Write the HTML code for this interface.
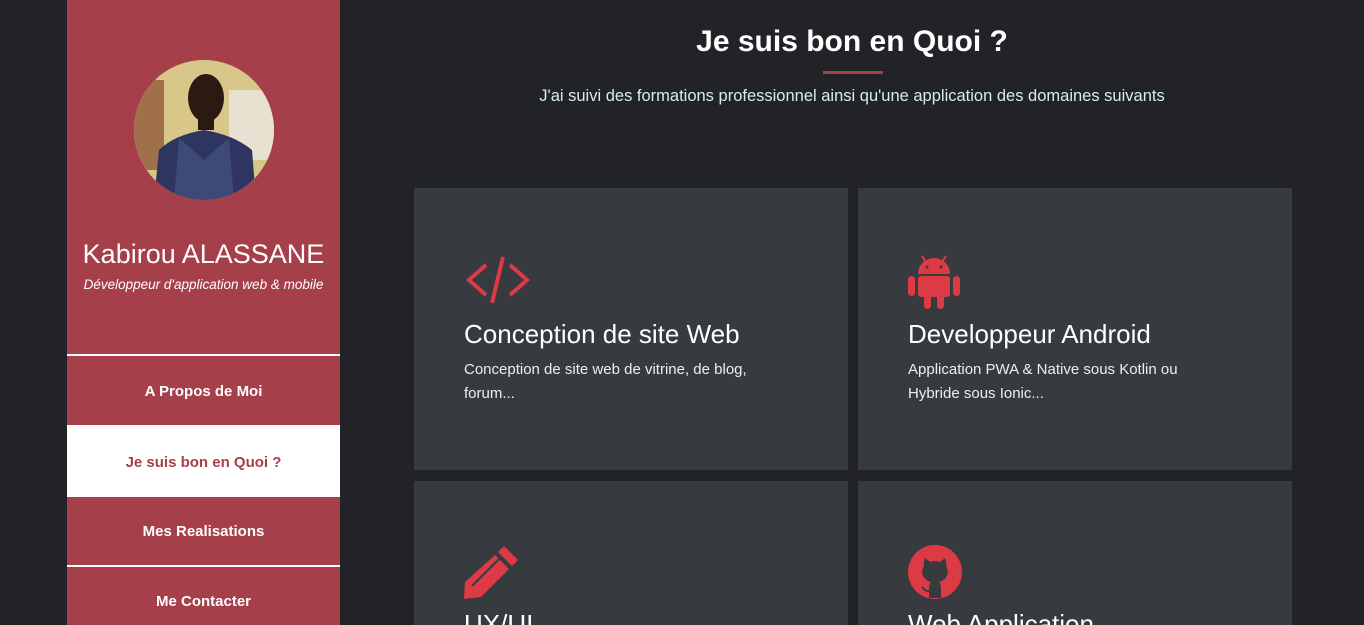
<!DOCTYPE html>
<html><head><meta charset="utf-8"><style>
*{margin:0;padding:0;box-sizing:border-box}
html,body{width:1364px;height:625px;overflow:hidden}
body{background:#212327;font-family:"Liberation Sans",sans-serif;color:#fff;position:relative}
.side{position:absolute;left:67px;top:0;width:273px;height:625px;background:#a53f4a}
.photo{position:absolute;left:134px;top:60px;width:140px;height:140px;border-radius:50%;overflow:hidden;background:#c9b98a}
.name{position:absolute;left:67px;width:273px;top:239px;text-align:center;font-size:27px}
.role{position:absolute;left:67px;width:273px;top:277px;text-align:center;font-size:13.5px;font-style:italic}
.menu{position:absolute;left:67px;width:273px;text-align:center;font-size:15px;font-weight:bold}
.line{position:absolute;left:67px;width:273px;height:2px;background:#fff}
h1{position:absolute;left:340px;right:0;top:25px;text-align:center;font-size:30px;font-weight:bold}
.ul{position:absolute;left:823px;top:71px;width:60px;height:3px;background:#a53f4a}
.sub{position:absolute;left:340px;right:0;top:87px;text-align:center;font-size:16.5px;color:#d6ecf5}
.card{position:absolute;width:434px;background:#373a3f}
.card svg{position:absolute;left:50px}
.card h2{position:absolute;left:50px;top:131px;font-size:26px;font-weight:normal}
.card p{position:absolute;left:50px;top:170px;width:315px;font-size:15px;line-height:24px;color:#eee}
</style></head><body>
<div class="side"></div>
<div class="photo"><svg width="140" height="140" viewBox="0 0 140 140">
<rect width="140" height="140" fill="#d9c789"/><rect x="0" y="20" width="30" height="90" fill="#a0704a"/><rect x="95" y="30" width="45" height="70" fill="#e8e0d0"/>
<path d="M20 140 L25 90 Q40 75 70 70 Q100 75 118 90 L122 140Z" fill="#2d3560"/>
<path d="M45 78 L70 100 L95 78 L100 140 L40 140Z" fill="#3d4a78"/>
<ellipse cx="72" cy="38" rx="18" ry="24" fill="#2a1a12"/><rect x="64" y="55" width="16" height="15" fill="#2a1a12"/>
</svg></div>
<div class="name">Kabirou ALASSANE</div>
<div class="role">Développeur d'application web &amp; mobile</div>
<div class="line" style="top:354px"></div>
<div class="menu" style="top:383px">A Propos de Moi</div>
<div style="position:absolute;left:67px;top:425px;width:273px;height:72px;background:#fff"></div>
<div class="menu" style="top:454px;color:#a53f4a">Je suis bon en Quoi ?</div>
<div class="menu" style="top:523px">Mes Realisations</div>
<div class="line" style="top:565px"></div>
<div class="menu" style="top:593px">Me Contacter</div>

<h1>Je suis bon en Quoi ?</h1>
<div class="ul"></div>
<div class="sub">J'ai suivi des formations professionnel ainsi qu'une application des domaines suivants</div>

<div class="card" style="left:414px;top:188px;height:282px">
<svg style="top:67px" width="70" height="50" viewBox="0 0 70 50"><g fill="none" stroke="#dc3a45" stroke-width="4"><path d="M22 10 L5 25 L22 40"/><path d="M46 10 L63 25 L46 40"/><path d="M39 2 L28 48"/></g></svg>
<h2>Conception de site Web</h2>
<p>Conception de site web de vitrine, de blog, forum...</p></div>
<div class="card" style="left:858px;top:188px;height:282px">
<svg style="top:64px" width="52" height="58" viewBox="0 0 52 58"><g fill="#dc3a45"><path d="M10 22 A16 16 0 0 1 42 22Z"/><line x1="14" y1="4" x2="18" y2="10" stroke="#dc3a45" stroke-width="2"/><line x1="38" y1="4" x2="34" y2="10" stroke="#dc3a45" stroke-width="2"/><rect x="10" y="24" width="32" height="21" rx="3"/><rect x="0" y="24" width="7" height="20" rx="3.5"/><rect x="45" y="24" width="7" height="20" rx="3.5"/><rect x="16" y="40" width="7" height="17" rx="3.5"/><rect x="29" y="40" width="7" height="17" rx="3.5"/></g><circle cx="19" cy="15" r="1.5" fill="#373a3f"/><circle cx="33" cy="15" r="1.5" fill="#373a3f"/></svg>
<h2>Developpeur Android</h2>
<p>Application PWA &amp; Native sous Kotlin ou Hybride sous Ionic...</p></div>
<div class="card" style="left:414px;top:481px;height:144px">
<svg style="top:63px" width="56" height="56" viewBox="0 0 56 56"><path fill="#dc3a45" d="M40 2 L54 16 L48 22 L34 8Z M31 11 L45 25 L17 53 L0 55 L1 38Z"/><path d="M8 42 L36 14" stroke="#373a3f" stroke-width="2"/></svg>
<h2 style="top:128px">UX/UI</h2></div>
<div class="card" style="left:858px;top:481px;height:144px">
<svg style="top:63px" width="56" height="56" viewBox="0 0 56 56"><circle cx="27" cy="28" r="27" fill="#dc3a45"/><path fill="#373a3f" d="M17 14 L22 18 Q27 16 32 18 L37 14 Q39 19 38 22 Q41 26 39 32 Q36 37 31 38 Q33 40 33 44 L33 54 L21 54 L21 48 Q15 48 13 42 Q16 43 18 46 L21 46 L21 44 Q21 40 23 38 Q18 37 15 32 Q13 26 16 22 Q15 19 17 14Z"/></svg>
<h2 style="top:128px">Web Application</h2></div>
</body></html>
